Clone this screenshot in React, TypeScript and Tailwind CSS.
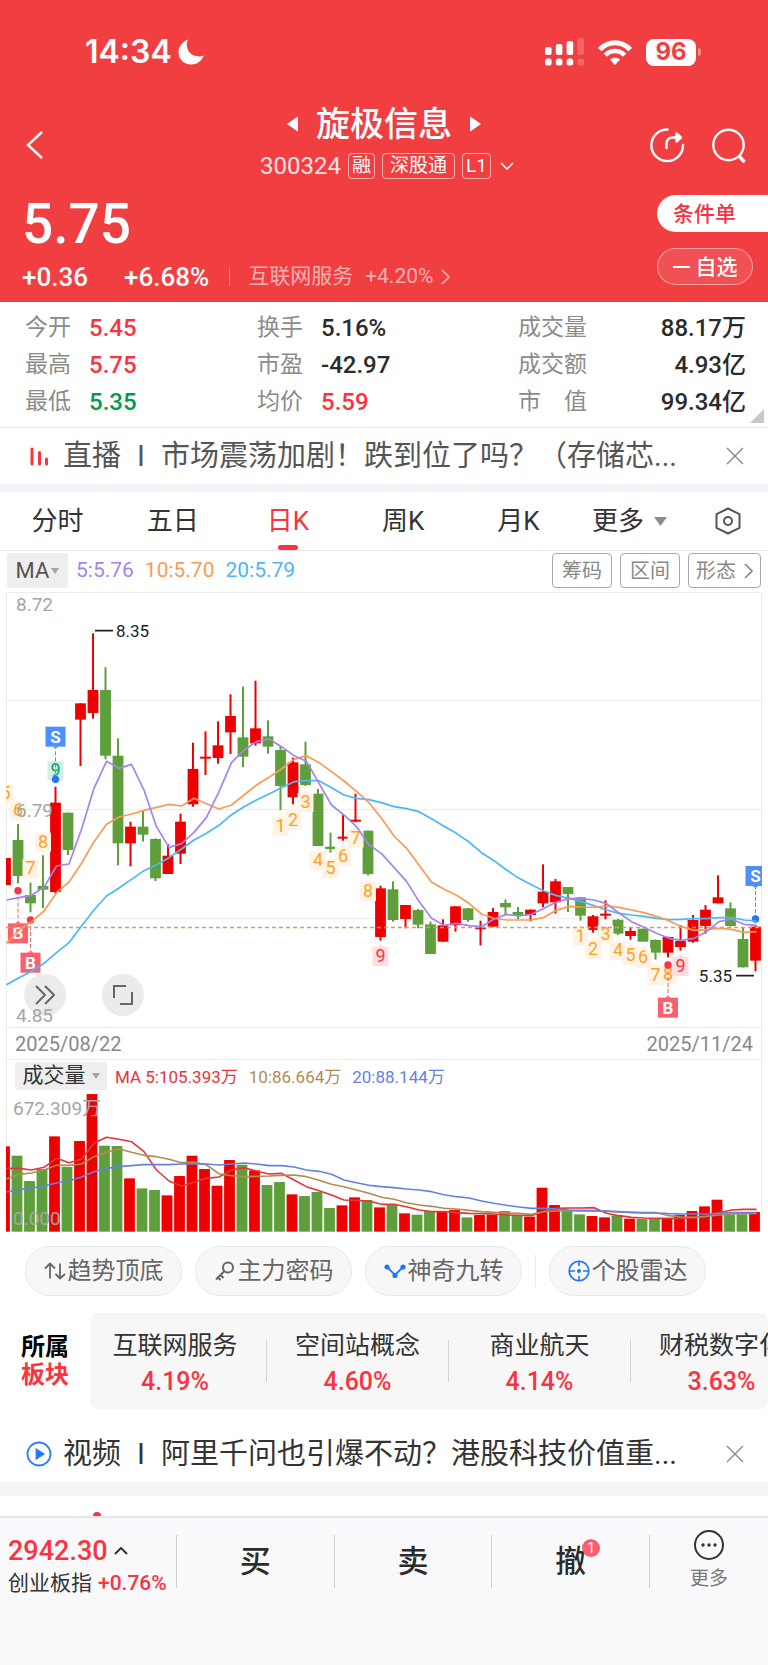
import React from 'react';

type Candle = [color: 'r' | 'g', high: number, top: number, bottom: number, low: number];

const RED = '#ee0000';
const GREEN = '#5f9f3b';
const STEP = 12.5;

// Chart values are stored in thirds of a chart unit
const u = (v: number) => v / 3;
const cx = (i: number) => 5.5 + i * STEP;
const toPoints = (values: number[], offset = 0) =>
    values.map((v, i) => `${cx(i) + 1},${u(v - offset)}`).join(' ');

const candles: Candle[] = [
    ['r', 804, 804, 885, 885], ['g', 702, 750, 858, 880], ['g', 878, 915, 940, 967], ['g', 796, 888, 899, 954],
    ['r', 590, 638, 906, 910], ['g', 668, 668, 780, 795], ['r', 340, 340, 389, 528], ['r', 130, 300, 369, 386],
    ['g', 232, 300, 497, 508], ['g', 445, 497, 760, 826], ['r', 695, 710, 760, 829], ['g', 663, 710, 734, 755],
    ['g', 745, 747, 865, 873], ['r', 762, 797, 852, 852], ['r', 671, 695, 791, 822], ['r', 458, 537, 643, 650],
    ['r', 424, 500, 504, 555], ['r', 394, 466, 504, 521], ['r', 313, 378, 427, 492], ['g', 290, 442, 500, 531],
    ['r', 272, 415, 460, 467], ['g', 391, 439, 470, 491], ['g', 468, 480, 588, 660], ['r', 503, 517, 622, 643],
    ['g', 455, 523, 585, 588], ['g', 597, 611, 768, 768], ['g', 728, 770, 777, 788], ['r', 675, 740, 744, 752],
    ['r', 611, 689, 693, 697], ['g', 722, 722, 852, 856], ['r', 887, 895, 1041, 1052], ['g', 874, 898, 990, 995],
    ['r', 945, 945, 987, 1015], ['g', 957, 960, 1004, 1015], ['g', 995, 1003, 1092, 1092], ['r', 988, 1006, 1055, 1055],
    ['r', 948, 949, 1006, 1025], ['g', 954, 955, 990, 995], ['r', 992, 1012, 1017, 1066], ['r', 954, 966, 1010, 1010],
    ['g', 928, 939, 952, 973], ['g', 951, 966, 976, 988], ['r', 958, 959, 975, 994], ['r', 823, 905, 940, 951],
    ['r', 867, 874, 937, 971], ['g', 891, 891, 912, 966], ['g', 922, 922, 977, 992], ['r', 975, 979, 1020, 1028],
    ['r', 931, 971, 976, 988], ['g', 987, 989, 1031, 1035], ['r', 1012, 1023, 1038, 1049], ['g', 1016, 1016, 1055, 1055],
    ['g', 1048, 1050, 1088, 1109], ['r', 1040, 1041, 1088, 1102], ['r', 1005, 1053, 1071, 1082], ['r', 975, 990, 1055, 1058],
    ['r', 945, 959, 1008, 1031], ['r', 856, 922, 940, 940], ['g', 937, 955, 1008, 1010], ['g', 1013, 1047, 1132, 1132],
    ['r', 1005, 1010, 1112, 1144],
];

const ma5 = [930, 923, 916, 892, 828, 822, 718, 595, 514, 535, 523, 600, 710, 772, 761, 727, 682, 605, 518, 480, 455, 447, 470, 497, 514, 580, 645, 675, 710, 764, 791, 832, 874, 934, 985, 1006, 1000, 1007, 1010, 987, 973, 978, 973, 955, 936, 926, 926, 930, 941, 969, 995, 1012, 1030, 1045, 1051, 1045, 1025, 995, 987, 1003, 1006];
const ma10 = [1060, 1020, 995, 963, 908, 876, 820, 755, 703, 681, 672, 661, 652, 643, 648, 625, 641, 657, 645, 615, 585, 562, 537, 508, 497, 518, 545, 573, 604, 638, 685, 738, 775, 825, 876, 898, 916, 940, 972, 985, 990, 990, 990, 982, 961, 949, 951, 952, 948, 952, 960, 968, 979, 992, 1010, 1021, 1019, 1015, 1018, 1027, 1025];
const ma20 = [1184, 1163, 1144, 1120, 1088, 1058, 1008, 960, 918, 894, 868, 842, 824, 803, 777, 750, 730, 706, 674, 650, 630, 612, 593, 575, 572, 572, 593, 615, 625, 629, 638, 650, 656, 665, 686, 709, 730, 756, 788, 812, 840, 865, 884, 903, 917, 925, 935, 947, 960, 970, 975, 979, 985, 989, 988, 986, 986, 983, 983, 990, 993];

const volumes = [256, 228, 152, 188, 286, 194, 272, 413, 258, 257, 160, 130, 125, 109, 167, 228, 188, 138, 215, 201, 184, 140, 149, 112, 107, 119, 71, 79, 103, 95, 73, 80, 55, 51, 62, 62, 65, 43, 50, 51, 62, 49, 45, 132, 80, 65, 52, 47, 43, 49, 39, 38, 38, 39, 50, 62, 76, 96, 52, 52, 59];
const vol5 = [415, 415, 420, 412, 385, 398, 388, 340, 322, 328, 335, 365, 420, 453, 468, 457, 445, 441, 420, 413, 423, 432, 430, 450, 470, 482, 495, 510, 511, 513, 523, 523, 530, 540, 545, 545, 548, 550, 551, 552, 555, 556, 557, 543, 535, 534, 534, 533, 550, 557, 562, 564, 565, 565, 565, 563, 559, 548, 540, 538, 538];
const vol10 = [447, 433, 429, 420, 406, 406, 402, 380, 367, 357, 367, 376, 380, 388, 398, 396, 405, 431, 437, 440, 439, 438, 436, 435, 440, 451, 463, 470, 480, 490, 502, 508, 518, 525, 529, 535, 537, 541, 545, 547, 549, 550, 553, 545, 543, 542, 543, 543, 544, 546, 547, 548, 548, 557, 561, 562, 559, 555, 552, 551, 550];
const vol20 = [486, 479, 475, 467, 459, 452, 441, 425, 415, 410, 407, 404, 404, 404, 402, 401, 402, 405, 402, 399, 402, 407, 407, 411, 420, 424, 433, 450, 458, 466, 470, 473, 477, 480, 485, 494, 500, 504, 513, 520, 526, 531, 535, 535, 537, 540, 541, 542, 543, 545, 547, 549, 549, 551, 552, 552, 552, 550, 548, 548, 548];

// Count labels: candle index, digit, centre, side of the candle they sit on
const counts: { i: number; n: number; y: number; up?: boolean; tone?: 'red' | 'green' }[] = [
    { i: 0, n: 5, y: 610, up: true }, { i: 1, n: 6, y: 660, up: true }, { i: 2, n: 7, y: 835, up: true },
    { i: 3, n: 8, y: 755, up: true }, { i: 4, n: 9, y: 541, up: true, tone: 'green' },
    { i: 22, n: 1, y: 707 }, { i: 23, n: 2, y: 690 }, { i: 24, n: 3, y: 636 }, { i: 25, n: 4, y: 811 },
    { i: 26, n: 5, y: 835 }, { i: 27, n: 6, y: 798 }, { i: 28, n: 7, y: 743 }, { i: 29, n: 8, y: 903 },
    { i: 30, n: 9, y: 1098, tone: 'red' },
    { i: 46, n: 1, y: 1037 }, { i: 47, n: 2, y: 1076 }, { i: 48, n: 3, y: 1033 }, { i: 49, n: 4, y: 1081 },
    { i: 50, n: 5, y: 1095 }, { i: 51, n: 6, y: 1102 }, { i: 52, n: 7, y: 1156 }, { i: 53, n: 8, y: 1153 },
    { i: 54, n: 9, y: 1128, tone: 'red' },
];

const trades: { i: number; side: 'B' | 'S'; box: number; dot: number }[] = [
    { i: 4, side: 'S', box: 440, dot: 568 },
    { i: 60, side: 'S', box: 858, dot: 987 },
    { i: 1, side: 'B', box: 1030, dot: 902 },
    { i: 2, side: 'B', box: 1118, dot: 990 },
    { i: 53, side: 'B', box: 1253, dot: 1125 },
];

const stats = [
    { label: '今开', value: '5.45', color: 'text-[#fb3340]' },
    { label: '换手', value: '5.16%', color: 'text-[#2b2b2b]' },
    { label: '成交量', value: '88.17万', color: 'text-[#2b2b2b]' },
    { label: '最高', value: '5.75', color: 'text-[#fb3340]' },
    { label: '市盈', value: '-42.97', color: 'text-[#2b2b2b]' },
    { label: '成交额', value: '4.93亿', color: 'text-[#2b2b2b]' },
    { label: '最低', value: '5.35', color: 'text-[#009b55]' },
    { label: '均价', value: '5.59', color: 'text-[#fb3340]' },
    { label: '市\u3000值', value: '99.34亿', color: 'text-[#2b2b2b]' },
];

const sectors = [
    { name: '互联网服务', change: '4.19%' },
    { name: '空间站概念', change: '4.60%' },
    { name: '商业航天', change: '4.14%' },
    { name: '财税数字化', change: '3.63%' },
];

const ArrowRight = () => (
    <svg className="w-[9px] h-4" viewBox="0 0 9 16" fill="none" stroke="currentColor" strokeWidth="1.6">
        <path d="M1 1L8 8L1 15" />
    </svg>
);

const CloseIcon = () => (
    <svg className="w-[18px] h-[18px]" viewBox="0 0 18 18" fill="none" stroke="currentColor" strokeWidth="1.5">
        <path d="M1 1L17 17M17 1L1 17" />
    </svg>
);

const StatusBar = () => (
    <div className="flex items-center justify-between pt-9 pr-[67px] pl-[85px] h-[68px]">
        <div className="flex items-center gap-1.5">
            <span className="font-[Inter,sans-serif] text-[32px] leading-8 font-semibold">14:34</span>
            <svg className="w-[26px] h-[26px]" viewBox="0 0 26 26" fill="currentColor">
                <path d="M10 0.5C3.8 3 0.5 8.2 0.5 13.3C0.5 20.3 6 25.6 13 25.6C18.8 25.6 23.8 22.2 25.7 16.6C24 17.2 22.4 17.4 20.8 17.4C13.7 17.4 8.8 12.6 8.8 5.6C8.8 3.7 9.2 2 10 0.5Z" />
            </svg>
        </div>
        <div className="flex items-center gap-3.5">
            <svg className="w-[39px] h-7" viewBox="0 0 39 28" fill="currentColor">
                <rect x="0" y="9" width="6.600" height="8" rx="2" />
                <rect x="10.800" y="6" width="6.600" height="11" rx="2" />
                <rect x="21.600" y="3" width="6.600" height="14" rx="2" />
                <rect x="32.400" y="0" width="6.600" height="17" rx="2" opacity="0.2" />
                <rect x="0" y="20.500" width="6.600" height="7" rx="2.500" />
                <rect x="10.800" y="20.500" width="6.600" height="7" rx="2.500" />
                <rect x="21.600" y="20.500" width="6.600" height="7" rx="2.500" />
                <rect x="32.400" y="20.500" width="6.600" height="7" rx="2.500" opacity="0.2" />
            </svg>
            <svg className="w-[34px] h-[25px]" viewBox="0 0 34 25" fill="none" stroke="currentColor" strokeWidth="5">
                <path d="M1.8 9.6C10 0.4 24 0.4 32.2 9.6" />
                <path d="M7.4 15.2C12.6 9.6 21.4 9.6 26.6 15.2" strokeWidth="4.6" />
                <path d="M17 25L11.8 19.6C14.8 17 19.2 17 22.2 19.600Z" fill="currentColor" stroke="none" />
            </svg>
            <div className="flex items-center gap-0.5">
                <span className="flex items-center justify-center w-[50px] h-[27px] rounded-lg bg-white text-[#f03e41] font-[Inter,sans-serif] text-2xl leading-6 font-bold">96</span>
                <span className="w-[3px] h-2 rounded-r-full bg-white/40" />
            </div>
        </div>
    </div>
);

const Tag = ({ children }: { children: React.ReactNode }) => (
    <span className="flex items-center h-[26px] px-[3px] border border-white/60 rounded-[4px] text-[19px] leading-5">{children}</span>
);

const Header = () => (
    <header className="bg-[#f03e41] text-white">
        <StatusBar />
        <div className="grid grid-cols-[1fr_auto_1fr] items-center pt-9 pl-[21px] pr-[21px]">
            <button aria-label="返回" className="justify-self-start mt-1.5">
                <svg className="w-7 h-8" viewBox="0 0 28 32" fill="none" stroke="currentColor" strokeWidth="2.4">
                    <path d="M21 3L7 16L21 29" />
                </svg>
            </button>
            <div className="flex flex-col items-center">
                <div className="flex items-center gap-[18px]">
                    <button aria-label="上一只">
                        <svg className="w-[11px] h-4" viewBox="0 0 11 16" fill="currentColor"><path d="M11 1V15Q11 16 10 15L0 8L10 1Q11 0 11 1Z" /></svg>
                    </button>
                    <h1 className="text-[34px] leading-10 font-medium">旋极信息</h1>
                    <button aria-label="下一只">
                        <svg className="w-[11px] h-4" viewBox="0 0 11 16" fill="currentColor"><path d="M0 1V15Q0 16 1 15L11 8L1 1Q0 0 0 1Z" /></svg>
                    </button>
                </div>
                <div className="flex items-center gap-[7px] mt-2 pl-1.5">
                    <span className="text-2xl leading-7 text-white/85">300324</span>
                    <Tag>融</Tag>
                    <Tag><span className="px-1">深股通</span></Tag>
                    <Tag>L1</Tag>
                    <svg className="w-3.5 h-2 ml-0.5" viewBox="0 0 14 8" fill="none" stroke="currentColor" strokeWidth="1.5"><path d="M1 1L7 7L13 1" /></svg>
                </div>
            </div>
            <div className="flex items-center justify-self-end gap-[26px] mt-1.5">
                <button aria-label="分享">
                    <svg className="w-9 h-9" viewBox="0 0 36 36" fill="none" stroke="currentColor" strokeWidth="2.4" strokeLinecap="round">
                        <path d="M18.5 2.500A15.800 15.800 0 1 0 34 18" />
                        <path d="M17.5 21V17C17.5 13 20 10.500 24 10.500H27" />
                        <path d="M27.500 6.500L32 10.500L27.500 14.500Z" fill="currentColor" strokeLinejoin="round" />
                    </svg>
                </button>
                <button aria-label="搜索">
                    <svg className="w-9 h-9" viewBox="0 0 36 36" fill="none" stroke="currentColor" strokeWidth="2.4" strokeLinecap="round">
                        <circle cx="17.500" cy="18" r="15.200" />
                        <path d="M28.500 29.500L32.500 34" strokeWidth="3.4" />
                    </svg>
                </button>
            </div>
        </div>
        <div className="flex justify-between pt-[9px] pb-[7px]">
            <div className="pl-[22px]">
                <div className="text-[55px] leading-[70px] font-medium">5.75</div>
                <div className="flex items-center h-9">
                    <span className="text-[26px] font-medium">+0.36</span>
                    <span className="ml-9 text-[26px] font-medium">+6.68%</span>
                    <span className="w-px h-[18px] ml-5 mr-[18px] bg-white/40" />
                    <a href="#sector" className="flex items-center text-white/60">
                        <span className="text-[21px]">互联网服务</span>
                        <span className="ml-3 mr-2 text-[21px]">+4.20%</span>
                        <ArrowRight />
                    </a>
                </div>
            </div>
            <div className="flex flex-col items-end gap-4 pt-1.5">
                <button className="w-[111px] h-[37px] pl-4 rounded-l-full bg-white text-left text-[21px] leading-6 font-medium text-[#f5333f]">条件单</button>
                <button className="flex items-center justify-center gap-1.5 w-24 h-[37px] mr-[15px] rounded-full border border-white/45 bg-white/10 text-[21px] leading-6 font-medium">
                    <span className="w-[17px] h-0.5 bg-white" />
                    自选
                </button>
            </div>
        </div>
    </header>
);

const Stats = () => (
    <section className="relative border-b border-[#ebebeb] py-[7px] pl-[25px] pr-[22px]">
        <dl className="grid grid-cols-[232px_261px_1fr]">
            {stats.map((s, i) => (
                <div key={s.label} className={`flex items-center h-[37px] ${i % 3 === 2 ? 'justify-between' : 'gap-[18px]'}`}>
                    <dt className="text-[23px] leading-8 text-[#8b8b8b]">{s.label}</dt>
                    <dd className={`text-2xl leading-8 font-medium ${s.color}`}>{s.value}</dd>
                </div>
            ))}
        </dl>
        <svg className="absolute right-1 bottom-1 w-3.5 h-3.5" viewBox="0 0 14 14" fill="#c8c8c8"><path d="M14 0V14H0Z" /></svg>
    </section>
);

const NewsRow = ({ icon, kind, title, tone }: { icon: React.ReactNode; kind: string; title: string; tone: string }) => (
    <div className={`flex items-center h-14 pl-[26px] pr-6 ${tone}`}>
        <span className="flex w-[37px]">{icon}</span>
        <a href="#news" className="flex flex-1 min-w-0 items-center text-[29px] leading-10">
            <span className="shrink-0">{kind}</span>
            <span className="shrink-0 w-10 text-center">I</span>
            <span className="whitespace-nowrap">{title}</span>
        </a>
        <button aria-label="关闭" className="text-[#8e8e8e]"><CloseIcon /></button>
    </div>
);

const Tabs = () => (
    <nav className="grid grid-cols-[repeat(5,15%)_1fr_auto] items-center h-[59px] border-b border-[#ebebeb] text-[26px] leading-8 text-[#333]">
        <button>分时</button>
        <button>五日</button>
        <button className="relative h-[58px] text-[#fb3340]">
            日K
            <span className="absolute bottom-0 left-1/2 -translate-x-1/2 w-5 h-[5px] rounded-sm bg-[#fb3340]" />
        </button>
        <button>周K</button>
        <button>月K</button>
        <button className="flex items-center gap-2.5 pl-4">
            更多
            <svg className="w-[13px] h-[9px]" viewBox="0 0 13 9" fill="#8c8c8c"><path d="M0 0H13L6.5 9Z" /></svg>
        </button>
        <button aria-label="设置" className="pr-[26px]">
            <svg className="w-7 h-7" viewBox="0 0 28 28" fill="none" stroke="#555" strokeWidth="2" strokeLinejoin="round">
                <path d="M14 1.500L25.500 7.200V20.800L14 26.500L2.500 20.800V7.200Z" />
                <circle cx="14" cy="14" r="4" />
            </svg>
        </button>
    </nav>
);

const CountLabel = ({ i, n, y, up, tone }: (typeof counts)[number]) => {
    const fill = tone === 'red' ? '#ffdde0' : tone === 'green' ? '#d3efe3' : '#fff3e5';
    const color = tone === 'red' ? '#fb3340' : tone === 'green' ? '#00a862' : '#ffa31f';
    const x = cx(i);
    const c = u(y);
    const tip = up ? `M${x - 3} ${c + 9}h6l-3 3z` : `M${x - 3} ${c - 9}h6l-3 -3z`;
    return (
        <g>
            <rect x={x - 8} y={c - 9} width="16" height="19" fill={fill} />
            <path d={tip} fill={fill} />
            <text x={x} y={c + 6} fontSize="18" textAnchor="middle" fill={color}>{n}</text>
        </g>
    );
};

const TradeMark = ({ i, side, box, dot }: (typeof trades)[number]) => {
    const x = cx(i);
    const c = u(box);
    const sell = side === 'S';
    const fill = sell ? '#4d8fff' : '#fa5f6d';
    return (
        <g>
            <path d={`M${x} ${u(dot)}V${sell ? c + 12 : c - 12}`} stroke={fill} strokeDasharray="4 2" />
            <circle cx={x} cy={u(dot)} r="3.7" fill={sell ? '#1f75ff' : '#ff3344'} />
            <rect x={x - 10} y={c - 10} width="20" height="20" fill={fill} />
            <path d={sell ? `M${x - 3} ${c + 10}h6l-3 2z` : `M${x - 3} ${c - 10}h6l-3 -2z`} fill={fill} />
            <text x={x} y={c + 6} fontSize="17" fontWeight="700" textAnchor="middle" fill="#fff">{side}</text>
        </g>
    );
};

const PriceChart = () => (
    <div className="relative">
        <svg className="block w-full" viewBox="0 0 768 438" role="img" aria-label="日K线">
            <defs>
                <clipPath id="plot"><rect x="6" y="0" width="756" height="438" /></clipPath>
            </defs>
            <path d="M6.5 438V2.5H761.5V438M6 110.5H762M6 219.5H762M6 328.5H762M6 437.5H762" fill="none" stroke="#ededed" />
            <g clipPath="url(#plot)">
                {candles.map(([color, high, top, bottom, low], i) => (
                    <g key={i} fill={color === 'r' ? RED : GREEN}>
                        <rect x={cx(i) - 1} y={u(high)} width="2" height={u(low - high)} />
                        <rect x={cx(i) - 5.4} y={u(top)} width="10.8" height={Math.max(u(bottom - top), 2)} />
                    </g>
                ))}
                {counts.map(c => <CountLabel key={c.i} {...c} />)}
                {trades.map(t => <TradeMark key={t.i} {...t} />)}
                <path d="M6 337.5H762" stroke="#c9a26b" strokeWidth="1.4" strokeDasharray="4 3" />
                <g fill="none" strokeWidth="1.7" strokeLinejoin="round">
                    <polyline points={toPoints(ma20)} stroke="#48b8fb" />
                    <polyline points={toPoints(ma10)} stroke="#fb9a55" />
                    <polyline points={toPoints(ma5)} stroke="#a384f0" />
                </g>
            </g>
            <path d="M95 40.7H113M736 385.7H754" stroke="#222" strokeWidth="1.8" />
            <g fontSize="17" fill="#222">
                <text x="116" y="47">8.35</text>
                <text x="732" y="392" textAnchor="end">5.35</text>
            </g>
            <g fontSize="19" fill="#a5a5a5">
                <text x="16" y="21">8.72</text>
                <text x="16" y="227">6.79</text>
            </g>
        </svg>
        <div className="absolute bottom-3 left-6 flex gap-9 text-[#666]">
            <button aria-label="展开" className="flex items-center justify-center w-[42px] h-[42px] rounded-full bg-[#ebebeb]">
                <svg className="w-5 h-5" viewBox="0 0 20 20" fill="none" stroke="currentColor" strokeWidth="2">
                    <path d="M1 1L10 10L1 19M10 1L19 10L10 19" />
                </svg>
            </button>
            <button aria-label="全屏" className="flex items-center justify-center w-[42px] h-[42px] rounded-full bg-[#ebebeb]">
                <svg className="w-5 h-5" viewBox="0 0 20 20" fill="none" stroke="currentColor" strokeWidth="2">
                    <path d="M1 13V1H13M19 7V19H7" />
                </svg>
            </button>
        </div>
        <span className="absolute bottom-0 left-4 text-[19px] leading-6 text-[#a5a5a5]">4.85</span>
    </div>
);

const VolumeChart = () => (
    <svg className="block w-full" viewBox="0 0 768 141" role="img" aria-label="成交量">
        <path d="M6.5 0V140M761.5 0V140" stroke="#ededed" />
        <g clipPath="url(#plot)">
            {volumes.map((v, i) => (
                <rect key={i} x={cx(i) - 6.4} y={139.7 - u(v)} width="10.8" height={u(v)} fill={candles[i][0] === 'r' ? RED : GREEN} />
            ))}
            <g fill="none" strokeWidth="1.6" strokeLinejoin="round">
                <polyline points={toPoints(vol5, 186)} stroke="#e5343a" />
                <polyline points={toPoints(vol10, 186)} stroke="#b18c50" />
                <polyline points={toPoints(vol20, 186)} stroke="#6481e3" />
            </g>
        </g>
        <g fontSize="19" fill="#a5a5a5">
            <text x="13" y="23">672.309万</text>
            <text x="13" y="133">0.000</text>
        </g>
    </svg>
);

const SmallCaret = () => (
    <svg className="w-2 h-1.5" viewBox="0 0 8 6" fill="#a5a5a5"><path d="M0 0H8L4 6Z" /></svg>
);

const OutlineButton = ({ children }: { children: React.ReactNode }) => (
    <button className="flex items-center justify-center gap-2 min-w-[60px] h-[35px] px-[7px] border border-[#a8a8a8] rounded-[4px] text-xl leading-6 text-[#888]">{children}</button>
);

const Chart = () => (
    <section>
        <div className="flex items-center h-[39px] pl-[7px] pr-[7px]">
            <button className="flex items-center justify-center gap-0.5 w-[61px] h-[35px] rounded-[3px] bg-[#eeeeee] text-[22px] text-[#555]">
                MA<SmallCaret />
            </button>
            <div className="flex flex-1 gap-[11px] ml-2 text-[21px]">
                <span className="text-[#a384f0]">5:5.76</span>
                <span className="text-[#fb9a55]">10:5.70</span>
                <span className="text-[#48b8fb]">20:5.79</span>
            </div>
            <div className="flex gap-2">
                <OutlineButton>筹码</OutlineButton>
                <OutlineButton>区间</OutlineButton>
                <OutlineButton>形态<ArrowRight /></OutlineButton>
            </div>
        </div>
        <PriceChart />
        <div className="mx-1.5 border-x border-b border-[#ededed] flex items-center justify-between h-8 pl-2 pr-2 text-[20px] leading-6 text-[#888]">
            <span>2025/08/22</span>
            <span>2025/11/24</span>
        </div>
        <div className="mx-1.5 border-x border-[#ededed] flex items-center h-8 pl-2 text-[17px]">
            <button className="flex items-center justify-center gap-1.5 w-[92px] h-7 mr-2 rounded-[3px] bg-[#eeeeee] text-[21px] text-[#333]">
                成交量<SmallCaret />
            </button>
            <div className="flex gap-[11px] pt-1">
                <span className="text-[#e5343a]">MA 5:105.393万</span>
                <span className="text-[#b18c50]">10:86.664万</span>
                <span className="text-[#6481e3]">20:88.144万</span>
            </div>
        </div>
        <VolumeChart />
    </section>
);

const Chip = ({ icon, label }: { icon: React.ReactNode; label: string }) => (
    <button className="flex items-center justify-center gap-0.5 w-[157px] h-[50px] rounded-full border border-[#e8e8e8] bg-[#f7f7f7] text-2xl text-[#666]">
        {icon}{label}
    </button>
);

const Chips = () => (
    <div className="flex items-center gap-[13px] pt-[13px] pl-[25px]">
        <Chip label="趋势顶底" icon={
            <svg className="w-[22px] h-[22px]" viewBox="0 0 22 22" fill="none" stroke="currentColor" strokeWidth="1.8">
                <path d="M1 8.500L6 3.500L11 8.500M6 3.500V18.500M16 3.500V18.500M11.500 14L16 18.500L21 14" />
            </svg>
        } />
        <Chip label="主力密码" icon={
            <svg className="w-[22px] h-[22px]" viewBox="0 0 22 22" fill="none" stroke="currentColor" strokeWidth="2">
                <circle cx="14" cy="7.500" r="5" />
                <path d="M10.500 11L2 19.500M6.500 15L9.500 18M3.500 17L6.500 20" />
            </svg>
        } />
        <Chip label="神奇九转" icon={
            <svg className="w-[22px] h-[22px]" viewBox="0 0 22 22" fill="#1f75ff" stroke="#1f75ff" strokeWidth="1.8">
                <path d="M3 7L11 15L19 7" fill="none" />
                <circle cx="3" cy="7" r="1.700" /><circle cx="11" cy="15.500" r="1.700" /><circle cx="19" cy="7" r="1.700" />
            </svg>
        } />
        <span className="w-px h-8 bg-[#ebebeb]" />
        <Chip label="个股雷达" icon={
            <svg className="w-[22px] h-[22px]" viewBox="0 0 22 22" fill="none" stroke="#1f75ff" strokeWidth="1.6">
                <circle cx="11" cy="11" r="9.800" />
                <path d="M11 1V6M11 16V21M1 11H7M15 11H21" />
                <circle cx="11" cy="11" r="1.200" fill="#1f75ff" />
            </svg>
        } />
    </div>
);

const Sectors = () => (
    <section id="sector" className="flex items-center mt-[17px]">
        <h2 className="shrink-0 w-[90px] pl-[21px] text-2xl leading-7 font-bold text-black">
            所属<br /><span className="text-[#fb3340]">板块</span>
        </h2>
        <ul className="flex flex-1 items-center h-24 rounded-lg bg-[#f7f7f7] overflow-hidden">
            {sectors.map((s, i) => (
                <li key={s.name} className={`flex shrink-0 items-center ${i === 0 ? 'w-[177px]' : 'w-[182px]'}`}>
                    <a href="#sector" className={`flex-1 pt-1.5 text-center whitespace-nowrap ${i === 0 ? 'pr-1.5' : ''}`}>
                        <div className="text-[25px] leading-9 text-[#333]">{s.name}</div>
                        <div className="text-[25px] leading-9 font-medium text-[#fb3340]">{s.change}</div>
                    </a>
                    <span className="w-px h-[42px] bg-[#d4d4d4]" />
                </li>
            ))}
        </ul>
    </section>
);

const BottomBar = () => (
    <footer className="flex items-start h-[149px] pt-[17px] border-t-2 border-[#e4e5ec] bg-[#f9f9fb]">
        <a href="#index" className="w-44 pl-2 whitespace-nowrap">
            <div className="flex items-center gap-1.5 text-[27px] leading-8 font-medium text-[#fb3340]">
                2942.30
                <svg className="w-3.5 h-2" viewBox="0 0 14 8" fill="none" stroke="#333" strokeWidth="2"><path d="M1 7L7 1L13 7" /></svg>
            </div>
            <div className="flex items-center gap-1.5 text-[21px] leading-8 text-[#333]">
                创业板指<span className="font-medium text-[#fb3340]">+0.76%</span>
            </div>
        </a>
        <button className="flex-1 h-[53px] pt-0.5 border-l border-[#d0d0d4] text-[31px] font-medium text-[#2b2b2b]">买</button>
        <button className="flex-1 h-[53px] pt-0.5 border-l border-[#d0d0d4] text-[31px] font-medium text-[#2b2b2b]">卖</button>
        <button className="flex-1 h-[53px] pt-0.5 border-x border-[#d0d0d4] text-[31px] font-medium text-[#2b2b2b]">
            <span className="relative">
                撤
                <span className="absolute -top-1 -right-3.5 flex items-center justify-center w-[18px] h-[18px] rounded-full bg-[#fa5f6d] text-sm leading-4 font-normal text-white">1</span>
            </span>
        </button>
        <button className="flex flex-col items-center w-[118px] -mt-1.5 text-[19px] leading-7 text-[#777]">
            <svg className="w-8 h-8" viewBox="0 0 32 32" fill="none" stroke="#333" strokeWidth="2">
                <circle cx="16" cy="16" r="14" />
                <g fill="#333" stroke="none"><circle cx="10" cy="16" r="1.700" /><circle cx="16" cy="16" r="1.700" /><circle cx="22" cy="16" r="1.700" /></g>
            </svg>
            <span className="mt-1">更多</span>
        </button>
    </footer>
);

const App = () => (
    <div className="bg-white font-[Roboto,'Noto_Sans_CJK_SC',sans-serif]">
        <Header />
        <Stats />
        <NewsRow
            kind="直播"
            title="市场震荡加剧！跌到位了吗？（存储芯..."
            tone="text-[#555]"
            icon={
                <svg className="w-6 h-6" viewBox="0 0 24 24" stroke="#fb3340" strokeWidth="3" strokeLinecap="round">
                    <path d="M6 5V20M13.5 8.500V20M20.500 15V20" />
                </svg>
            }
        />
        <div className="h-2 bg-[#f2f4f8]" />
        <Tabs />
        <Chart />
        <Chips />
        <Sectors />
        <div className="pt-[17px]">
            <NewsRow
                kind="视频"
                title="阿里千问也引爆不动？港股科技价值重..."
                tone="text-[#333]"
                icon={
                    <svg className="w-[26px] h-[26px]" viewBox="0 0 26 26" fill="none" stroke="#2b7bff" strokeWidth="1.8">
                        <circle cx="13" cy="13" r="11.500" />
                        <path d="M10.500 8.500L17.500 13L10.500 17.500Z" fill="#1f75ff" />
                    </svg>
                }
            />
        </div>
        <div className="h-3.5 bg-[#f2f4f8]" />
        <div className="flex items-end h-5 pl-[93px] overflow-hidden">
            <span className="w-2 h-1 rounded-t-full bg-[#fb3340]" />
        </div>
        <BottomBar />
    </div>
);

export default App;
